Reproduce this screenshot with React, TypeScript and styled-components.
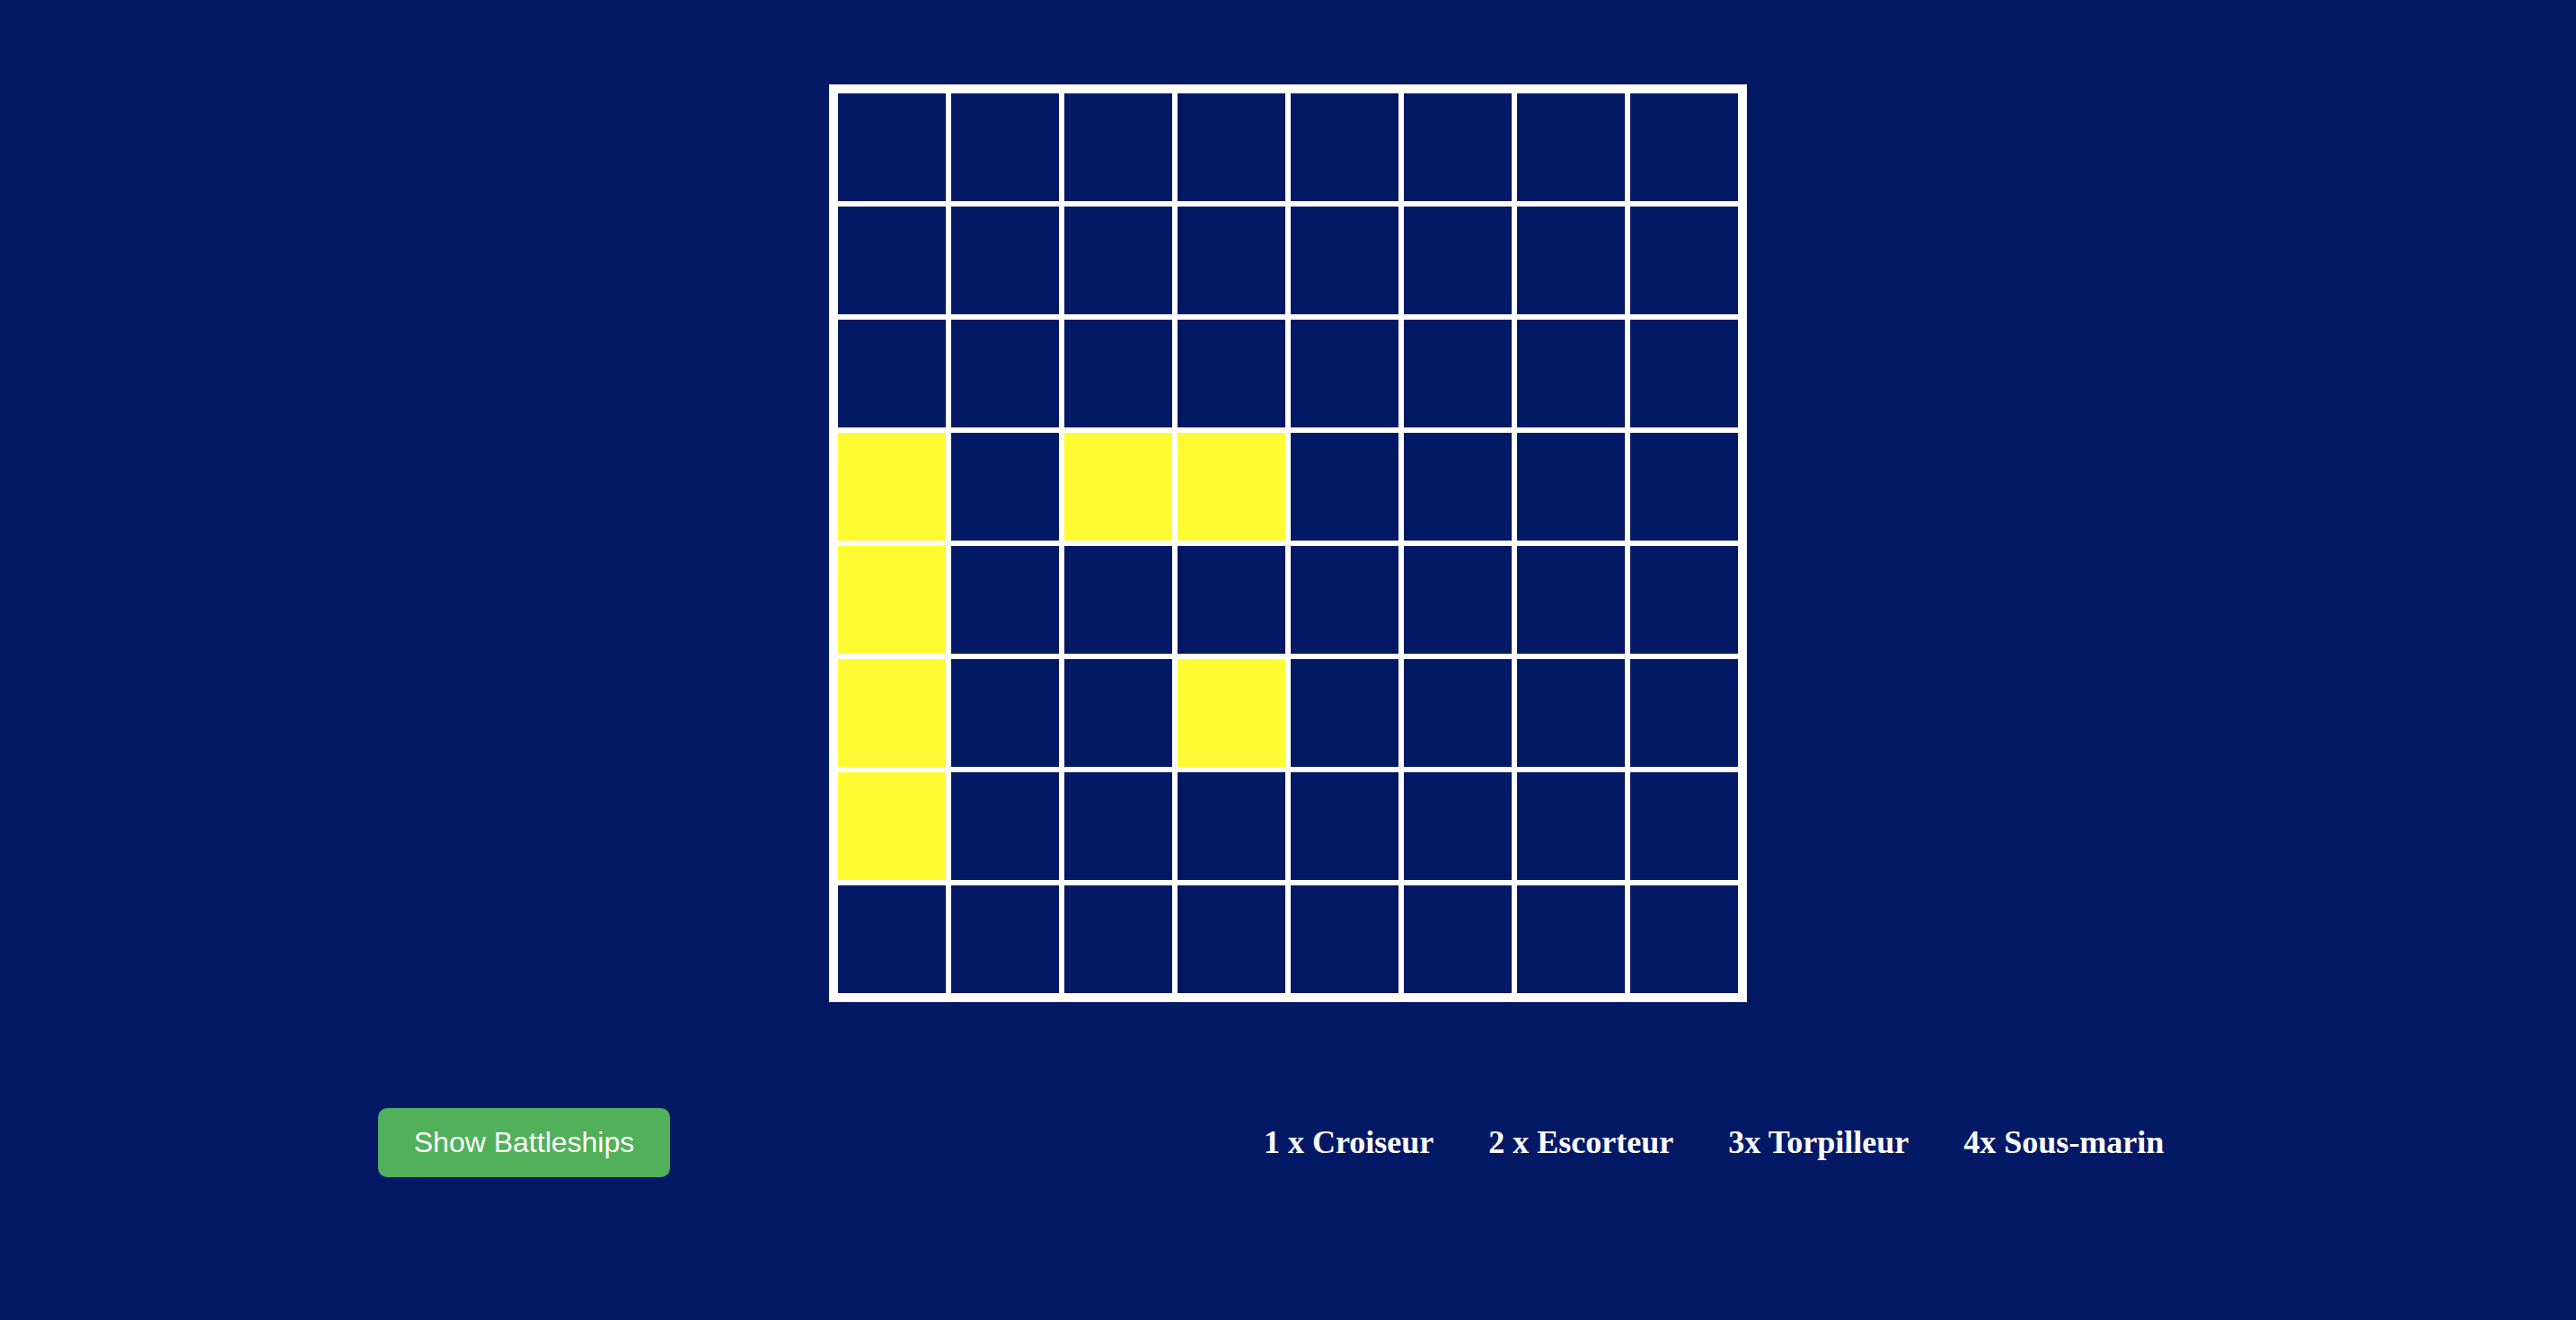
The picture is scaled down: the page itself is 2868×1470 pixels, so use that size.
import React from "react";
import styled, { createGlobalStyle } from "styled-components";

const GlobalStyle = createGlobalStyle`
  html, body {
    margin: 0;
    padding: 0;
    background: #041966;
  }
  #root {
    min-height: 1470px;
  }
`;

const Page = styled.div`
  width: 2868px;
  height: 1470px;
  background: #041966;
  display: flex;
  flex-direction: column;
  align-items: stretch;
  box-sizing: border-box;
  padding-top: 94px;
`;

const Board = styled.div`
  align-self: center;
  display: grid;
  grid-template-columns: repeat(8, 120px);
  grid-template-rows: repeat(8, 120px);
  gap: 6px;
  padding: 10px;
  background: #ffffff;
`;

const Cell = styled.div<{ $ship: boolean }>`
  background: ${(p) => (p.$ship ? "#fffb33" : "#041966")};
`;

const BottomRow = styled.div`
  display: flex;
  align-items: center;
  margin-top: 118px;
  padding-left: 421px;
`;

const ShowButton = styled.button`
  height: 77px;
  width: 325px;
  border: none;
  border-radius: 10px;
  background: #51b05a;
  color: #ffffff;
  font-family: "Liberation Sans", Arial, sans-serif;
  font-size: 32px;
  cursor: pointer;
  padding: 0;
`;

const Fleet = styled.div`
  display: flex;
  align-items: center;
  gap: 61px;
  margin-left: 661px;
  margin-top: -2px;
`;

const FleetItem = styled.h3`
  margin: 0;
  color: #ffffff;
  font-family: "Liberation Serif", "Times New Roman", serif;
  font-weight: bold;
  font-size: 36px;
  line-height: 1;
  white-space: nowrap;
`;

const ships = new Set(["3-0", "3-2", "3-3", "4-0", "5-0", "5-3", "6-0"]);

const fleet = ["1 x Croiseur", "2 x Escorteur", "3x Torpilleur", "4x Sous-marin"];

export default function App() {
  const cells = [];
  for (let r = 0; r < 8; r++) {
    for (let c = 0; c < 8; c++) {
      cells.push(<Cell key={`${r}-${c}`} $ship={ships.has(`${r}-${c}`)} />);
    }
  }
  return (
    <>
      <GlobalStyle />
      <Page>
        <Board>{cells}</Board>
        <BottomRow>
          <ShowButton>Show Battleships</ShowButton>
          <Fleet>
            {fleet.map((f) => (
              <FleetItem key={f}>{f}</FleetItem>
            ))}
          </Fleet>
        </BottomRow>
      </Page>
    </>
  );
}
